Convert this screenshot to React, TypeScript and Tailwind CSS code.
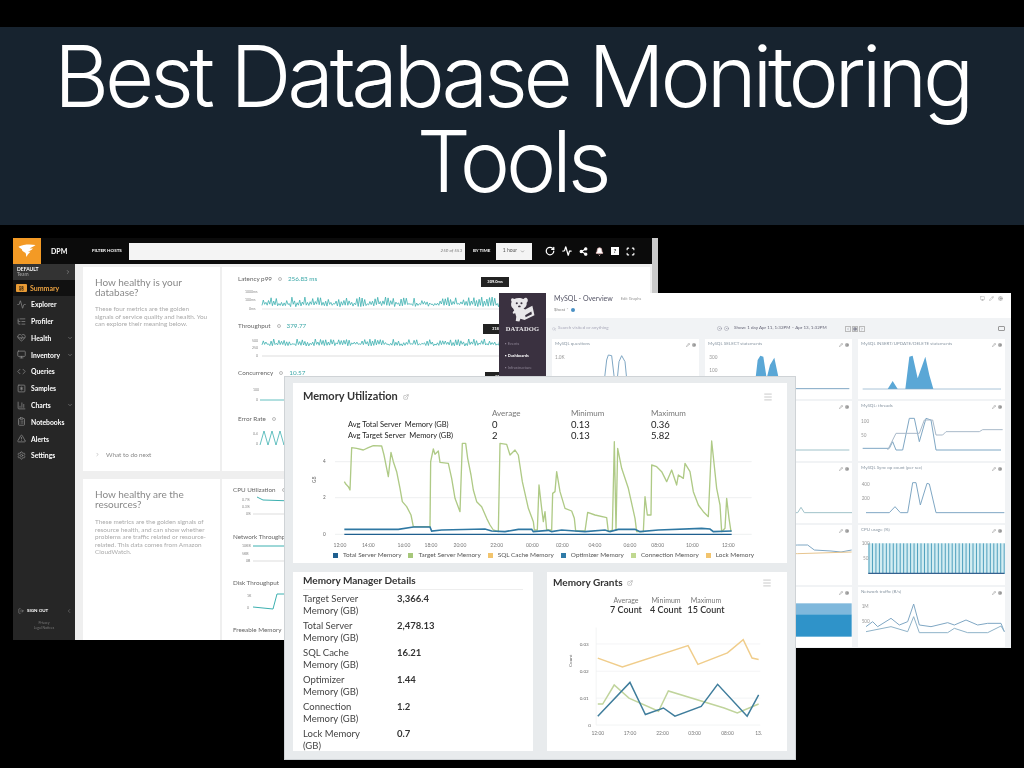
import { Activity, BarChart3, Bell, ChevronDown, ChevronRight, ClipboardList, Code, ExternalLink, HeartPulse, LayoutDashboard, ListTree, LogOut, Scan, Menu, Monitor, Pencil, RotateCw, Settings, Share2, SquareAsterisk, TriangleAlert, Cog, ChevronLeft, Search, CircleDot } from "lucide-react";

// deterministic noise so the spiky latency charts stay the same between runs
function noise(from: number, to: number, step: number, base: number, amp: number, seed: number) {
  const pts: string[] = [];
  let s = seed;
  let i = 0;
  for (let x = from; x <= to; x += step) {
    s = (s * 9301 + 49297) % 233280;
    const r = s / 233280;
    const y = i % 2 === 0 ? base + r * amp * 0.4 : base - r * amp;
    pts.push(`${x},${y.toFixed(1)}`);
    i++;
  }
  return pts.join(" ");
}

const NAV = [
  { label: "Explorer", icon: Activity },
  { label: "Profiler", icon: ListTree },
  { label: "Health", icon: HeartPulse, more: true },
  { label: "Inventory", icon: Monitor, more: true },
  { label: "Queries", icon: Code },
  { label: "Samples", icon: SquareAsterisk },
  { label: "Charts", icon: BarChart3, more: true },
  { label: "Notebooks", icon: ClipboardList },
  { label: "Alerts", icon: TriangleAlert },
  { label: "Settings", icon: Settings },
];

function Metric({ label, value, h, children }: { label: string; value?: string; h: string; children?: React.ReactNode }) {
  return (
    <div className={`flex flex-col ${h}`}>
      <div className="flex items-center gap-[6px] whitespace-nowrap text-[6.3px] leading-[8px] text-[#666]">
        <span>{label}</span>
        <span className="size-[4px] rounded-full border-[0.5px] border-[#bbb]" />
        {value && <span className="text-[#3aa7a7]">{value}</span>}
      </div>
      {children}
    </div>
  );
}

function Tip({ className, children }: { className: string; children: React.ReactNode }) {
  return (
    <span className={`absolute flex h-[10px] w-[28px] items-center justify-center bg-[#222] text-[4px] font-bold text-white ${className}`}>
      {children}
    </span>
  );
}

function SolarWindsWindow() {
  return (
    <div className="absolute left-[13px] top-[13px] flex h-[402px] w-[645px] flex-col bg-[#efefef] blur-[0.6px]">
      {/* top bar */}
      <div className="flex h-[26px] shrink-0 items-center bg-[#0b0b0b] text-white">
        <div className="flex h-[26px] w-[28px] items-center justify-center bg-[#f39a25]">
          <svg viewBox="0 0 28 26" className="size-[24px]">
            <path d="M4 8 C10 5 18 5 24 6 C21 8 19 9 17 10 L21 10 C19 12 17 13 15 14 L18 14 C16 16 15 17 13 20 C13 18 13 16 12 15 C10 14 8 13 8 11 C7 10 5 9 4 8 Z" fill="#fff" />
          </svg>
        </div>
        <span className="ml-[10px] w-[41px] text-[7px] font-bold">DPM</span>
        <span className="w-[37px] whitespace-nowrap text-[4.5px] font-bold">FILTER HOSTS</span>
        <div className="flex h-[17px] w-[336px] items-center justify-end bg-[#f4f4f4] pr-[3px] text-[4.5px] italic text-[#777]">250 of 553</div>
        <span className="ml-[8px] w-[23px] whitespace-nowrap text-[4.5px] font-bold">BY TIME</span>
        <div className="flex h-[17px] w-[36px] items-center justify-center gap-[3px] bg-[#f4f4f4] text-[5px] text-[#555]">
          1 hour <ChevronDown className="size-[5px]" />
        </div>
        <div className="ml-[13px] flex items-center gap-[7px]">
          <RotateCw className="size-[10px]" strokeWidth={3} />
          <Activity className="size-[10px]" strokeWidth={3} />
          <Share2 className="size-[9px] fill-white" strokeWidth={3} />
          <Bell className="size-[9px] fill-white text-[#e8b9b9]" />
          <span className="flex size-[8px] items-center justify-center bg-white text-[6px] font-bold leading-none text-[#222]">?</span>
          <Scan className="size-[9px]" strokeWidth={3} />
        </div>
      </div>
      <div className="flex min-h-0 flex-1">
        {/* sidebar */}
        <div className="flex w-[62px] shrink-0 flex-col bg-[#262626] text-white">
          <div className="flex h-[16px] items-center justify-between bg-[#333] pl-[4px] pr-[4px] text-[5px] font-bold leading-[5px]">
            <span>
              DEFAULT
              <br />
              <span className="font-normal text-[#aaa]">Team</span>
            </span>
            <ChevronRight className="size-[6px] text-[#aaa]" />
          </div>
          <div className="flex h-[16px] items-center gap-[3px] bg-[#111] pl-[3px] text-[7px] font-bold text-[#e8a040]">
            <span className="flex h-[8px] w-[11px] items-center justify-center rounded-[1px] bg-[#e89b35]">
              <LayoutDashboard className="size-[5px] text-[#111]" />
            </span>
            Summary
          </div>
          {NAV.map(({ label, icon: Icon, more }) => (
            <div key={label} className="flex h-[16.8px] items-center pl-[4px] pr-[2px] text-[6.8px] font-bold">
              <Icon className="size-[9px] text-[#8a8a8a]" />
              <span className="ml-[5px] flex-1">{label}</span>
              {more && <ChevronDown className="size-[6px] text-[#999]" />}
            </div>
          ))}
          <div className="mt-auto flex h-[14px] items-center gap-[3px] pl-[5px] text-[4.5px] font-bold">
            <LogOut className="size-[6px] text-[#999]" />
            <span className="flex-1">SIGN OUT</span>
            <ChevronLeft className="mr-[3px] size-[6px] text-[#888]" />
          </div>
          <div className="h-[22px] pt-[3px] text-center text-[3.5px] leading-[5px] text-[#777]">
            Privacy
            <br />
            Legal Notices
          </div>
        </div>
        {/* content */}
        <div className="flex min-w-0 flex-1 flex-col gap-[8px] pb-0 pl-[8px] pr-[8px] pt-[3px]">
          <section className="flex h-[204px] shrink-0 gap-[2px]">
            <div className="flex w-[137px] flex-col bg-white pl-[12px] pt-[10px]">
              <h2 className="text-[10px] leading-[10px] text-[#888]">
                How healthy is your
                <br />
                database?
              </h2>
              <p className="mt-[8px] whitespace-nowrap text-[6.4px] leading-[7.5px] text-[#aaa]">
                These four metrics are the golden
                <br />
                signals of service quality and health. You
                <br />
                can explore their meaning below.
              </p>
              <div className="mb-[12px] mt-auto flex items-center gap-[6px] text-[6.3px] text-[#888]">
                <ChevronRight className="size-[5px]" />
                What to do next
              </div>
            </div>
            <div className="relative flex flex-1 flex-col bg-white pl-[16px] pt-[8px]">
              <Metric label="Latency p99" value="256.83 ms" h="h-[47px]">
                <svg viewBox="0 0 412 30" className="h-[30px] w-[412px]" fill="none">
                  <text x="7" y="10" fontSize="3.5" fill="#888">1000ms</text>
                  <text x="7" y="18" fontSize="3.5" fill="#888">100ms</text>
                  <text x="11" y="27" fontSize="3.5" fill="#888">0ms</text>
                  <line x1="24" y1="26" x2="412" y2="26" stroke="#ccc" strokeWidth="0.5" />
                  <polyline points={noise(24, 412, 1.3, 21, 7, 7)} stroke="#3cb0b0" strokeWidth="0.8" />
                </svg>
              </Metric>
              <Metric label="Throughput" value="379.77" h="h-[47px]">
                <svg viewBox="0 0 412 30" className="h-[30px] w-[412px]" fill="none">
                  <text x="14" y="12" fontSize="3.5" fill="#888">500</text>
                  <text x="14" y="19" fontSize="3.5" fill="#888">250</text>
                  <text x="18" y="27" fontSize="3.5" fill="#888">0</text>
                  <line x1="24" y1="26" x2="412" y2="26" stroke="#bbb" strokeWidth="0.5" />
                  <polyline points={noise(24, 412, 1.3, 14, 5, 31)} stroke="#3cb0b0" strokeWidth="0.8" />
                </svg>
              </Metric>
              <Metric label="Concurrency" value="10.57" h="h-[46px]">
                <svg viewBox="0 0 412 30" className="h-[30px] w-[412px]" fill="none">
                  <text x="15" y="14" fontSize="3.5" fill="#888">100</text>
                  <text x="18" y="24" fontSize="3.5" fill="#888">0</text>
                  <polyline points="22,23 412,23" stroke="#3cb0b0" strokeWidth="0.8" />
                </svg>
              </Metric>
              <Metric label="Error Rate" h="h-[46px]">
                <svg viewBox="0 0 412 30" className="h-[30px] w-[412px]" fill="none">
                  <text x="15" y="12" fontSize="3.5" fill="#888">0.4</text>
                  <text x="18" y="22" fontSize="3.5" fill="#888">0</text>
                  <polyline points="22,22 26,8 30,22 34,8 38,22 42,8 46,22 50,8 54,22" stroke="#3cb0b0" strokeWidth="0.8" />
                </svg>
              </Metric>
              {/* hover tooltips */}
              <Tip className="left-[259px] top-[10px]">309.0ms</Tip>
              <Tip className="left-[261px] top-[57px]">318.0</Tip>
              <Tip className="left-[263px] top-[105px]">10.0</Tip>
            </div>
          </section>
          <section className="flex min-h-0 flex-1 gap-[2px]">
            <div className="w-[137px] bg-white pl-[12px] pt-[10px]">
              <h2 className="text-[10px] leading-[10px] text-[#888]">
                How healthy are the
                <br />
                resources?
              </h2>
              <p className="mt-[9px] whitespace-nowrap text-[6.4px] leading-[7.5px] text-[#aaa]">
                These metrics are the golden signals of
                <br />
                resource health, and can show whether
                <br />
                problems are traffic related or resource-
                <br />
                related. This data comes from Amazon
                <br />
                CloudWatch.
              </p>
            </div>
            <div className="flex flex-1 flex-col bg-white pl-[11px] pt-[7px]">
              <Metric label="CPU Utilization" h="h-[47px]">
                <svg viewBox="0 0 60 30" className="h-[30px] w-[60px]" fill="none">
                  <text x="9" y="7" fontSize="3.5" fill="#888">0.7%</text>
                  <text x="9" y="14" fontSize="3.5" fill="#888">0.3%</text>
                  <text x="13" y="21" fontSize="3.5" fill="#888">0%</text>
                  <polyline points="24,3 30,6 60,7" stroke="#3cb0b0" />
                  <line x1="20" y1="20" x2="60" y2="20" stroke="#bbb" strokeWidth="0.5" />
                </svg>
              </Metric>
              <Metric label="Network Throughput" h="h-[46px]">
                <svg viewBox="0 0 60 30" className="h-[30px] w-[60px]" fill="none">
                  <text x="9" y="6" fontSize="3.5" fill="#888">10KB</text>
                  <text x="9" y="14" fontSize="3.5" fill="#888">5KB</text>
                  <text x="13" y="21" fontSize="3.5" fill="#888">0B</text>
                  <line x1="20" y1="5" x2="60" y2="5" stroke="#3cb0b0" />
                  <line x1="20" y1="20" x2="60" y2="20" stroke="#bbb" strokeWidth="0.5" />
                </svg>
              </Metric>
              <Metric label="Disk Throughput" h="h-[47px]">
                <svg viewBox="0 0 60 30" className="h-[30px] w-[60px]" fill="none">
                  <text x="14" y="10" fontSize="3.5" fill="#888">1K</text>
                  <text x="14" y="22" fontSize="3.5" fill="#888">0</text>
                  <polyline points="20,20 40,22 44,7 60,7" stroke="#3cb0b0" />
                </svg>
              </Metric>
              <Metric label="Freeable Memory" h="h-[10px]" />
            </div>
          </section>
        </div>
      </div>
      {/* scrollbar, only its top shows */}
      <div className="absolute right-0 top-0 h-[55px] w-[6px] bg-[#c9c9c9]" />
    </div>
  );
}

function DdPanel({ title, view, children }: { title: string; view?: string; children?: React.ReactNode }) {
  return (
    <div className="flex h-[60px] flex-col bg-white">
      <div className="flex h-[11px] shrink-0 items-center justify-between px-[3px] text-[4.5px] text-[#8a97a3]">
        <span>{title}</span>
        <span className="flex items-center gap-[2px] text-[#666]">
          <Pencil className="size-[4px]" />
          <Cog className="size-[4px]" />
        </span>
      </div>
      {view && (
        <svg viewBox={view} preserveAspectRatio="none" className="h-[46px] w-full" fill="none">
          {children}
        </svg>
      )}
    </div>
  );
}

const BLUE = "#5aa7d6";
const SLATE = "#7fa7c4";

function DatadogWindow() {
  return (
    <div className="absolute left-[499px] top-[68px] flex h-[355px] w-[512px] bg-[#f1f3f5] blur-[0.5px]">
      <div className="flex w-[47px] shrink-0 flex-col items-center bg-[#3a3140] pt-[3px] text-white">
        {/* Datadog mascot: bear holding a sheet */}
        <svg viewBox="0 0 24 26" className="h-[27px] w-[25px]">
          <path d="M4 3 C2 1 0 3 1.500 5.500 C0.500 8 1 11 3 12 L4 14 C3 15 2 16 3 17 L5 16.500 L6 20 L5.500 24 L9 24.500 L10 22 L14 23 L23.500 18.500 L21.500 9.500 L14.500 13 L13 12 C15 11 16.500 9 16 6.500 C17.500 5.500 17.500 3 16 2 C14.800 1.400 14 2 13 3 C10.500 1.500 6.500 1.500 4 3 Z" fill="#e9e7ea" />
          <path d="M14.500 18.500 L20.500 15 L21 17.500 L15 20.500 Z" fill="#3a3140" />
          <circle cx="6.500" cy="7" r="1" fill="#3a3140" />
          <circle cx="11" cy="7" r="1" fill="#3a3140" />
          <ellipse cx="9" cy="10" rx="1.300" ry="0.900" fill="#3a3140" />
        </svg>
        <span className="mt-[1px] font-['Liberation_Serif',serif] text-[6.5px] font-bold tracking-[0.2px] text-[#e9e7ea]">DATADOG</span>
        <div className="mt-[6px] flex w-full flex-col gap-[5px] pl-[6px] text-[4px] leading-[7px]">
          <span className="text-[#8d8494]">▪ Events</span>
          <span className="font-bold text-white">▪ Dashboards</span>
          <span className="text-[#8d8494]">▪ Infrastructure</span>
        </div>
      </div>
      <div className="flex min-w-0 flex-1 flex-col">
        <div className="h-[25px] shrink-0 bg-white px-[8px] pt-[1px]">
          <div className="flex items-center justify-between">
            <span className="flex items-center gap-[8px]">
              <span className="text-[7px] leading-[9px] text-[#556]">MySQL - Overview</span>
              <span className="text-[4px] text-[#999]">Edit Graphs</span>
            </span>
            <span className="flex gap-[4px] text-[#999]">
              <Monitor className="size-[5px]" />
              <Pencil className="size-[5px]" />
              <Cog className="size-[5px]" />
            </span>
          </div>
          <div className="mt-[4px] flex items-center gap-[3px] text-[4.5px] text-[#888]">
            $host * <span className="size-[4px] rounded-full bg-[#4a90c4]" />
          </div>
        </div>
        <div className="flex h-[21px] shrink-0 items-center px-[6px] text-[4.5px] text-[#aab]">
          <span className="flex w-[165px] items-center gap-[2px]">
            <Search className="size-[4px]" />
            Search visited or anything
          </span>
          <span className="flex w-[17px] gap-[2px] text-[#889]">
            <CircleDot className="size-[5px]" />
            <CircleDot className="size-[5px]" />
          </span>
          <span className="whitespace-nowrap text-[#667]">Show: 1 day Apr 11, 1:32PM – Apr 13, 1:32PM</span>
          <span className="ml-[18px] flex gap-[1px]">
            <span className="flex size-[6px] items-center justify-center border-[0.5px] border-[#bbb] text-[#556]"><ChevronLeft className="size-[4px]" /></span>
            <span className="flex size-[6px] items-center justify-center border-[0.5px] border-[#bbb] text-[#556]"><Cog className="size-[4px]" /></span>
            <span className="flex size-[6px] items-center justify-center border-[0.5px] border-[#bbb] text-[#556]"><ChevronRight className="size-[4px]" /></span>
          </span>
          <span className="ml-auto h-[5px] w-[7px] rounded-[1px] border-[0.5px] border-[#999]" />
        </div>
        <div className="grid grid-cols-3 gap-x-[6px] gap-y-[2px] px-[6px]">
          <DdPanel title="MySQL questions" view="171 195 441 138">
            <polyline points="325,312 335,225 340,210 350,212 358,280 365,300 372,230 380,212 390,230 398,312" stroke={SLATE} strokeWidth="3" />
            <text x="180" y="222" fontSize="14" fill="#999">1.0K</text>
          </DdPanel>
          <DdPanel title="MySQL SELECT statements" view="627 195 441 138">
            <path d="M775,312 L785,225 L793,212 L802,215 L812,280 L822,240 L835,218 L848,280 L855,312 Z" fill={BLUE} />
            <text x="640" y="222" fontSize="14" fill="#999">300</text>
            <text x="640" y="262" fontSize="14" fill="#999">100</text>
            <line x1="640" y1="311" x2="1060" y2="311" stroke={SLATE} strokeWidth="3" />
          </DdPanel>
          <DdPanel title="MySQL INSERT/UPDATE/DELETE statements" view="1086 195 441 138">
            <path d="M1175,312 L1190,288 L1205,312 L1228,312 L1240,215 L1250,212 L1265,280 L1288,215 L1300,270 L1312,312 Z" fill={BLUE} />
            <line x1="1100" y1="312" x2="1515" y2="312" stroke={SLATE} strokeWidth="2" />
          </DdPanel>
          <DdPanel title="MySQL connections" />
          <DdPanel title="MySQL: table locks" view="627 381 441 138">
            <line x1="895" y1="495" x2="1060" y2="495" stroke="#9fc2c9" strokeWidth="3" />
          </DdPanel>
          <DdPanel title="MySQL: threads" view="1086 381 441 138">
            <polyline points="1100,490 1180,490 1190,470 1200,495 1220,495 1240,400 1255,400 1270,470 1290,400 1305,405 1320,495 1515,495" stroke={SLATE} strokeWidth="3" />
            <polyline points="1175,495 1200,445 1260,445 1270,445 1285,405 1310,405 1320,450 1340,450 1350,440 1450,440 1460,434 1520,434" stroke="#a9b9c9" strokeWidth="3" />
            <text x="1095" y="414" fontSize="14" fill="#999">100</text>
            <text x="1095" y="456" fontSize="14" fill="#999">50</text>
          </DdPanel>
          <DdPanel title="MySQL slow queries" />
          <DdPanel title="MySQL InnoDB" view="-258 72 441 138">
            <polyline points="-250,188 20,188 30,172 40,188 185,188" stroke="#9fc2c9" strokeWidth="3" />
          </DdPanel>
          <DdPanel title="MySQL Sync op count (per sec)" view="201 72 441 138">
            <polyline points="225,188 295,188 312,170 328,188 350,188 365,98 375,98 388,165 408,100 415,102 435,188 640,188" stroke={SLATE} strokeWidth="3" />
            <text x="212" y="108" fontSize="14" fill="#999">400</text>
            <text x="212" y="150" fontSize="14" fill="#999">200</text>
          </DdPanel>
          <DdPanel title="MySQL memory" />
          <DdPanel title="Load" view="-258 258 441 138">
            <polyline points="-250,300 20,285 50,285 70,300 120,303 150,306 182,300" stroke={SLATE} strokeWidth="3" />
            <polyline points="-250,310 20,311 182,306" stroke="#e7c58f" strokeWidth="3" />
          </DdPanel>
          <DdPanel title="CPU usage (%)" view="201 258 441 138">
            <path d="M232,280 h408 v92 h-408 Z" fill="#d3edf2" />
            {Array.from({ length: 40 }, (_, i) => (
              <line key={i} x1={234 + i * 10.4} y1="280" x2={234 + i * 10.4} y2="372" stroke="#4f9fbd" strokeWidth="3" />
            ))}
            <line x1="232" y1="370" x2="640" y2="370" stroke="#35618f" strokeWidth="4" />
            <text x="212" y="285" fontSize="14" fill="#999">100</text>
            <text x="216" y="330" fontSize="14" fill="#999">50</text>
          </DdPanel>
          <DdPanel title="Disk usage" />
          <DdPanel title="Disk space" view="-258 444 441 138">
            <rect x="-200" y="460" width="382" height="33" fill="#7fb8dc" />
            <rect x="-200" y="493" width="382" height="67" fill="#2f93c9" />
          </DdPanel>
          <DdPanel title="Network traffic (B/s)" view="201 444 441 138">
            <polyline points="225,530 245,515 260,530 300,505 325,525 350,515 368,462 385,525 420,530 470,518 490,525 525,510 560,525 590,520 630,520 640,545" stroke={SLATE} strokeWidth="3" />
            <polyline points="225,545 300,530 350,545 368,500 385,548 470,548 490,535 530,548 590,548 630,528 640,545" stroke="#8fb3c9" strokeWidth="3" />
            <text x="212" y="474" fontSize="14" fill="#999">1M</text>
            <text x="212" y="518" fontSize="14" fill="#999">500</text>
          </DdPanel>
        </div>
      </div>
    </div>
  );
}

const GREEN_LINE =
  "178,320 183,328 190,335 195,345 200,218 215,220 235,225 250,218 265,212 290,213 297,240 305,280 310,305 318,232 325,260 335,290 345,340 352,380 365,395 378,420 385,455 435,455 437,260 445,222 450,238 460,228 465,262 490,265 500,310 510,370 525,410 532,205 542,205 548,250 558,300 565,345 575,380 590,395 605,430 615,450 625,465 640,470 645,205 665,208 675,240 690,225 700,240 712,320 730,400 745,440 748,465 757,465 762,330 770,400 775,440 780,410 785,465 800,465 803,355 810,350 815,290 825,350 840,400 860,408 868,430 872,468 900,468 908,412 930,420 965,428 970,470 982,465 988,200 993,465 998,220 1010,280 1030,340 1050,430 1055,470 1075,470 1080,365 1087,420 1098,420 1100,270 1115,275 1130,290 1145,320 1160,285 1175,330 1180,300 1195,310 1200,265 1215,290 1225,350 1240,390 1255,410 1270,425 1280,198 1295,340 1305,390 1310,470 1320,460 1325,370 1332,430 1338,470";
const BLUE_LINE =
  "178,463 340,463 385,456 435,456 440,468 470,465 600,462 620,468 660,470 700,463 740,463 745,470 790,466 800,470 830,465 870,468 900,470 960,465 975,470 1000,463 1050,463 1065,470 1120,465 1250,460 1275,462 1285,470 1340,468";
const LEGEND = [
  ["bg-[#1f5f8f]", "Total Server Memory"],
  ["bg-[#a6c77a]", "Target Server Memory"],
  ["bg-[#f2c46d]", "SQL Cache Memory"],
  ["bg-[#2f7ba8]", "Optimizer Memory"],
  ["bg-[#c0d890]", "Connection Memory"],
  ["bg-[#f2c46d]", "Lock Memory"],
];
const XTICKS: [number, string][] = [
  [165, "12:00"], [250, "14:00"], [357, "16:00"], [438, "18:00"], [525, "20:00"], [635, "22:00"],
  [742, "00:00"], [832, "02:00"], [930, "04:00"], [1035, "06:00"], [1118, "08:00"], [1222, "10:00"], [1330, "12:00"],
];
const MANAGER = [
  ["Target Server", "Memory (GB)", "3,366.4"],
  ["Total Server", "Memory (GB)", "2,478.13"],
  ["SQL Cache", "Memory (GB)", "16.21"],
  ["Optimizer", "Memory (GB)", "1.44"],
  ["Connection", "Memory (GB)", "1.2"],
  ["Lock Memory", "(GB)", "0.7"],
];

function MemoryWindow() {
  return (
    <div className="absolute left-[284px] top-[151px] flex h-[384px] w-[512px] flex-col gap-[9px] border-[1px] border-[#cfd3d6] bg-[#e8ebed] px-[8px] pb-[8px] pt-[6px] blur-[0.35px]">
      {/* utilization */}
      <div className="flex h-[180px] shrink-0 flex-col bg-white">
        <div className="flex h-[22px] shrink-0 items-center justify-between pl-[10px] pr-[14px] pt-[5px]">
          <span className="flex items-center gap-[5px] text-[11px] font-bold text-[#333]">
            Memory Utilization
            <ExternalLink className="size-[6px] text-[#999]" />
          </span>
          <Menu className="size-[10px] text-[#aaa]" strokeWidth={1.5} />
        </div>
        <div className="relative h-0">
          <div className="absolute left-[55px] top-[3px] grid grid-cols-[144px_79px_80px_40px] text-[8px] leading-[11px] text-[#222]">
            <span />
            <span className="text-[#777]">Average</span>
            <span className="text-[#777]">Minimum</span>
            <span className="text-[#777]">Maximum</span>
            <span className="whitespace-pre text-[7.5px]">Avg Total Server  Memory (GB)</span>
            <span className="text-[9.5px]">0</span>
            <span className="text-[9.5px]">0.13</span>
            <span className="text-[9.5px]">0.36</span>
            <span className="whitespace-pre text-[7.5px]">Avg Target Server  Memory (GB)</span>
            <span className="text-[9.5px]">2</span>
            <span className="text-[9.5px]">0.13</span>
            <span className="text-[9.5px]">5.82</span>
          </div>
        </div>
        <svg viewBox="24 90 1482 429" className="h-[143px] w-[494px]" fill="none">
          {[260, 368, 478].map((y) => (
            <line key={y} x1="150" y1={y} x2="1400" y2={y} stroke="#e6e8ea" strokeWidth="2" />
          ))}
          <text x="114" y="264" fontSize="14" fill="#666">4</text>
          <text x="114" y="372" fontSize="14" fill="#666">2</text>
          <text x="114" y="483" fontSize="14" fill="#666">0</text>
          <text x="92" y="324" fontSize="14" fill="#666" transform="rotate(-90 92 324)">GB</text>
          <polyline points={GREEN_LINE} stroke="#afca86" strokeWidth="4" strokeLinejoin="round" />
          <polyline points={BLUE_LINE} stroke="#2f78a3" strokeWidth="5" />
          <line x1="178" y1="478" x2="1340" y2="478" stroke="#1f5f8f" strokeWidth="4" />
          {XTICKS.map(([x, t], i) => (
            <text key={i} x={x} y="516" fontSize="15" fill="#777" textAnchor="middle">{t}</text>
          ))}
        </svg>
        <div className="flex h-[15px] items-start gap-[7px] pl-[40px] pt-[3px] text-[6.4px] leading-[8px] text-[#555]">
          {LEGEND.map(([c, t]) => (
            <span key={t} className="flex items-center gap-[5px] whitespace-nowrap">
              <span className={`size-[5px] ${c}`} />
              {t}
            </span>
          ))}
        </div>
      </div>
      <div className="flex min-h-0 flex-1 gap-[14px]">
        {/* manager details */}
        <div className="w-[240px] bg-white pl-[10px]">
          <div className="mr-[10px] flex h-[18px] items-center border-b-[1px] border-[#eee] text-[10px] font-bold text-[#333]">Memory Manager Details</div>
          <div className="pt-[3px]">
            {MANAGER.map(([a, b, v]) => (
              <div key={a} className="grid h-[27px] grid-cols-[94px_1fr] text-[9.5px] leading-[11.5px] text-[#444]">
                <span>
                  {a}
                  <br />
                  {b}
                </span>
                <span className="font-bold text-[#333]">{v}</span>
              </div>
            ))}
          </div>
        </div>
        {/* grants */}
        <div className="flex flex-1 flex-col bg-white pl-[6px]">
          <div className="flex h-[19px] shrink-0 items-center justify-between pr-[15px] pt-[2px]">
            <span className="flex items-center gap-[4px] text-[10px] font-bold text-[#333]">
              Memory Grants
              <ExternalLink className="size-[6px] text-[#999]" />
            </span>
            <Menu className="size-[10px] text-[#aaa]" strokeWidth={1.5} />
          </div>
          <div className="ml-[53px] grid w-[120px] grid-cols-3 pt-[4px] text-center text-[7px] leading-[10px] text-[#777]">
            <span>Average</span>
            <span>Minimum</span>
            <span>Maximum</span>
            <span className="whitespace-nowrap text-[9px] font-semibold text-[#333]">7 Count</span>
            <span className="whitespace-nowrap text-[9px] font-semibold text-[#333]">4 Count</span>
            <span className="whitespace-nowrap text-[9px] font-semibold text-[#333]">15 Count</span>
          </div>
          <svg viewBox="804 165 702 396" className="mt-[6px] h-[132px] w-[234px]" fill="none">
            {[235, 318, 400, 482].map((y) => (
              <line key={y} x1="930" y1={y} x2="1430" y2={y} stroke="#eceeef" strokeWidth="2" />
            ))}
            <line x1="930" y1="185" x2="930" y2="482" stroke="#eceeef" strokeWidth="2" />
            <text x="880" y="240" fontSize="14" fill="#666">0.03</text>
            <text x="880" y="323" fontSize="14" fill="#666">0.02</text>
            <text x="880" y="405" fontSize="14" fill="#666">0.01</text>
            <text x="906" y="487" fontSize="14" fill="#666">0</text>
            <text x="858" y="305" fontSize="14" fill="#666" transform="rotate(-90 858 305)">Count</text>
            <polyline points="935,278 1010,305 1210,240 1240,297 1330,262 1378,222 1405,278 1425,282" stroke="#f0cd8b" strokeWidth="4.5" />
            <polyline points="935,418 950,418 985,360 1030,400 1120,440 1150,378 1320,430 1360,445 1425,418" stroke="#c0d49c" strokeWidth="4.5" />
            <polyline points="935,455 1033,352 1080,450 1135,430 1170,455 1250,425 1300,358 1390,455 1425,390" stroke="#3f7d9c" strokeWidth="4.5" />
            {([[935, "12:00"], [1033, "17:00"], [1132, "22:00"], [1230, "03:00"], [1330, "08:00"], [1425, "13."]] as [number, string][]).map(([x, t]) => (
              <text key={t} x={x} y="512" fontSize="15" fill="#777" textAnchor="middle">{t}</text>
            ))}
          </svg>
        </div>
      </div>
    </div>
  );
}

export default function App() {
  return (
    <div className="flex h-[768px] w-[1024px] flex-col overflow-hidden bg-black pt-[27px] font-['Lato',sans-serif]">
      <header className="flex h-[198px] shrink-0 flex-col items-center bg-[#17232f] pt-[7px] font-['Inter',sans-serif] text-[85px] font-light leading-[85px] tracking-[-0.05em] text-white">
        <h1 className="whitespace-nowrap font-light">Best Database Monitoring</h1>
        <p>Tools</p>
      </header>
      {/* the three overlapping product screenshots */}
      <div className="relative min-h-0 flex-1">
        <SolarWindsWindow />
        <DatadogWindow />
        <MemoryWindow />
      </div>
    </div>
  );
}
